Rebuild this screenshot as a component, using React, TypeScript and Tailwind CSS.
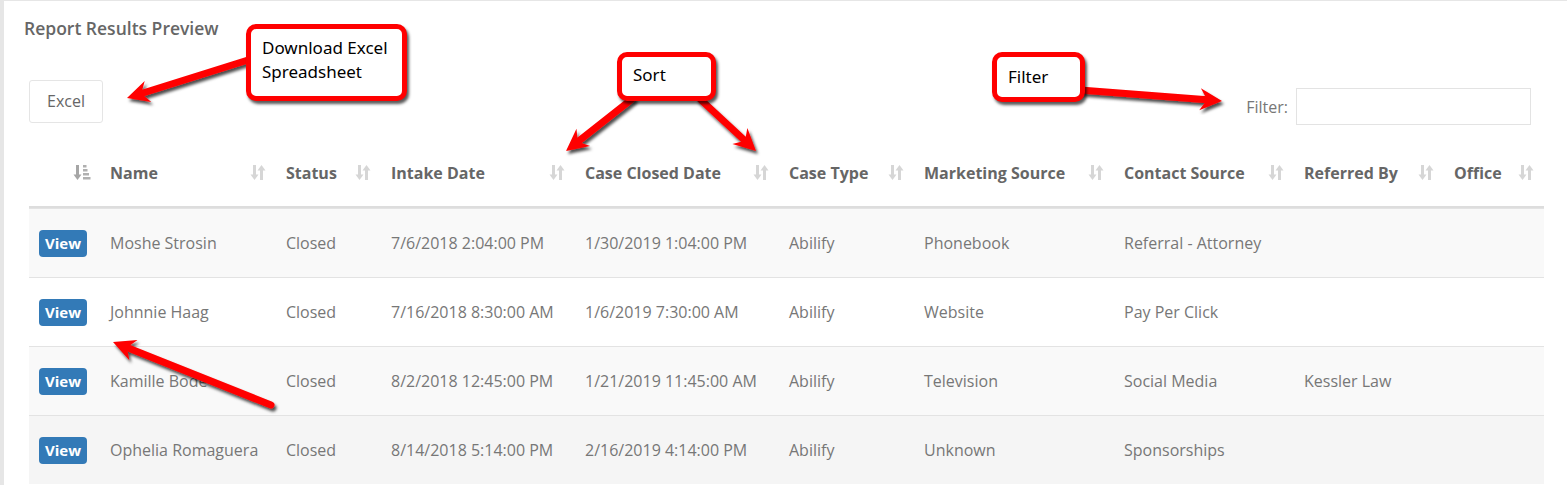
import React from "react";

/* ─── Data ─────────────────────────────────────────────── */
const COLUMNS = [
  "Name",
  "Status",
  "Intake Date",
  "Case Closed Date",
  "Case Type",
  "Marketing Source",
  "Contact Source",
  "Referred By",
  "Office",
];

const ROWS = [
  ["Moshe Strosin", "Closed", "7/6/2018 2:04:00 PM", "1/30/2019 1:04:00 PM", "Abilify", "Phonebook", "Referral - Attorney", "", ""],
  ["Johnnie Haag", "Closed", "7/16/2018 8:30:00 AM", "1/6/2019 7:30:00 AM", "Abilify", "Website", "Pay Per Click", "", ""],
  ["Kamille Bode", "Closed", "8/2/2018 12:45:00 PM", "1/21/2019 11:45:00 AM", "Abilify", "Television", "Social Media", "Kessler Law", ""],
  ["Ophelia Romaguera", "Closed", "8/14/2018 5:14:00 PM", "2/16/2019 4:14:00 PM", "Abilify", "Unknown", "Sponsorships", "", ""],
];

const ROW_BG = ["bg-[#f9f9f9]", "bg-white", "bg-[#f9f9f9]", "bg-[#f5f5f5]"];

const GRID = "grid grid-cols-[71px_176px_105px_194px_204px_135px_200px_180px_150px_100px]";

/* ─── Icons ────────────────────────────────────────────── */
function SortIcon() {
  return (
    <svg width="16" height="17" viewBox="0 0 16 17" aria-hidden="true">
      <path d="M4.5 1V11" stroke="#d6d6d6" strokeWidth="3" />
      <path d="M0.5 10.5H8.5L4.5 16Z" fill="#d6d6d6" />
      <path d="M11.5 16V6" stroke="#d6d6d6" strokeWidth="3" />
      <path d="M7.5 6.5H15.5L11.5 1Z" fill="#d6d6d6" />
    </svg>
  );
}

function SortAmountIcon() {
  return (
    <svg width="18" height="17" viewBox="0 0 18 17" aria-hidden="true">
      <path d="M4.5 1V11" stroke="#a6a6a6" strokeWidth="3" />
      <path d="M0.5 10.5H8.5L4.5 16Z" fill="#a6a6a6" />
      <rect x="10" y="1" width="3.5" height="2.5" fill="#b0b0b0" />
      <rect x="10" y="5" width="4.5" height="2.5" fill="#b0b0b0" />
      <rect x="10" y="9" width="6" height="2.5" fill="#b0b0b0" />
      <rect x="10" y="13" width="7.5" height="2.5" fill="#b0b0b0" />
    </svg>
  );
}

/* ─── Annotation arrows ────────────────────────────────── */
function Arrow({ x1, y1, x2, y2 }: { x1: number; y1: number; x2: number; y2: number }) {
  const len = Math.hypot(x2 - x1, y2 - y1);
  const ux = (x2 - x1) / len;
  const uy = (y2 - y1) / len;
  const nx = -uy;
  const ny = ux;
  const L = 22;
  const W = 11;
  const bx = x2 - ux * L;
  const by = y2 - uy * L;
  const mx = x2 - ux * (L - 7);
  const my = y2 - uy * (L - 7);
  const pts = [
    [x2, y2],
    [bx + nx * W, by + ny * W],
    [mx, my],
    [bx - nx * W, by - ny * W],
  ]
    .map((p) => p.join(","))
    .join(" ");
  return (
    <g filter="url(#shadow)">
      <line x1={x1} y1={y1} x2={mx} y2={my} stroke="#ff0000" strokeWidth="7" strokeLinecap="round" />
      <polygon points={pts} fill="#ff0000" />
    </g>
  );
}

function Callout({ className, children }: { className: string; children: React.ReactNode }) {
  return (
    <div
      className={
        "absolute bg-white border-[5px] border-[#ff0000] rounded-[10px] shadow-[2px_3px_3px_rgba(0,0,0,0.65)] pl-[11px] text-[17px] leading-[24px] text-black font-['Noto_Sans',sans-serif] " +
        className
      }
    >
      {children}
    </div>
  );
}

/* ─── App ──────────────────────────────────────────────── */
export default function App() {
  return (
    <div className="relative w-[1567px] h-[485px] overflow-hidden bg-white border-l-4 border-t border-[#e6e6e6] font-['Open_Sans',sans-serif]">
      {/* Titulo */}
      <div className="pl-[20px] pt-[16px] text-[17.5px] leading-[22px] font-semibold text-[#666]">
        Report Results Preview
      </div>

      {/* Toolbar */}
      <div className="flex items-start justify-between pl-[25px] pr-[36px] mt-[41px]">
        <button className="w-[74px] h-[43px] pb-[2px] border border-[#e5e5e5] rounded-[3px] text-[16px] text-[#666] bg-white">
          Excel
        </button>
        <div className="flex items-center gap-[8px] mt-[8px]">
          <span className="text-[16px] text-[#777]">Filter:</span>
          <input className="w-[235px] h-[37px] border border-[#e3e3e3] outline-none" />
        </div>
      </div>

      {/* Tabla */}
      <div className="ml-[25px] mt-[17px] w-[1515px]">
        <div className={GRID + " h-[66px] pb-[3px] border-b-2 border-[#dddddd]"}>
          <div className="flex items-center justify-end pr-[9px]">
            <SortAmountIcon />
          </div>
          {COLUMNS.map((c) => (
            <div key={c} className="flex items-center justify-between px-[10px] text-[16px] font-bold text-[#666]">
              <span>{c}</span>
              <SortIcon />
            </div>
          ))}
        </div>
        {ROWS.map((r, i) => (
          <div key={i} className={GRID + " h-[69px] border-t border-[#e3e3e3] first:border-t-0 " + ROW_BG[i]}>
            <div className="flex items-center pl-[10px]">
              <span className="w-[48px] h-[27px] flex items-center justify-center rounded-[4px] bg-[#337ab7] text-white text-[15px] font-bold">
                View
              </span>
            </div>
            {r.map((v, j) => (
              <div key={j} className="flex items-center px-[10px] text-[16px] text-[#777] whitespace-nowrap">
                {v}
              </div>
            ))}
          </div>
        ))}
      </div>

      {/* Anotaciones */}
      <svg className="absolute left-[-4px] top-[-1px] pointer-events-none" width="1567" height="485" aria-hidden="true">
        <defs>
          <filter id="shadow" x="-20%" y="-20%" width="140%" height="140%">
            <feDropShadow dx="2" dy="3" stdDeviation="1.6" floodColor="#000" floodOpacity="0.7" />
          </filter>
        </defs>
        <Arrow x1={248} y1={60} x2={127} y2={98} />
        <Arrow x1={632} y1={99} x2={566} y2={151} />
        <Arrow x1={700} y1={99} x2={756} y2={151} />
        <Arrow x1={1080} y1={90} x2={1222} y2={101} />
        <Arrow x1={271} y1={405} x2={113} y2={342} />
      </svg>

      <Callout className="left-[242px] top-[23px] w-[161px] h-[77px] pt-[7px]">
        Download Excel
        <br />
        Spreadsheet
      </Callout>
      <Callout className="left-[613px] top-[51px] w-[99px] h-[49px] pt-[6px]">Sort</Callout>
      <Callout className="left-[988px] top-[51px] w-[93px] h-[50px] pt-[8px]">Filter</Callout>
    </div>
  );
}
